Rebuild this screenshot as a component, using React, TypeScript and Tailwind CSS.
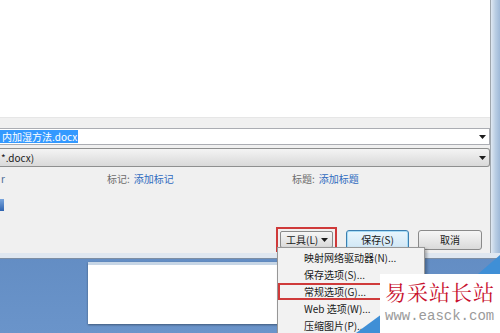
import React from 'react';

const cjk = "font-['Noto_Sans_CJK_SC',sans-serif]";

const MenuItem: React.FC<{ label: string; marked?: boolean }> = ({ label, marked }) => (
  <div
    className={`flex h-[17px] items-center whitespace-nowrap text-[10px] text-[#1a1a1a] ${
      marked ? 'border-2 border-[#cf3a3a] pl-[24px]' : 'pl-[26px]'
    }`}
  >
    {label}
  </div>
);

const Caret: React.FC = () => (
  <svg width="7" height="4" viewBox="0 0 7 4" className="shrink-0">
    <path d="M0 0h7L3.5 4z" fill="#1c1c1c" />
  </svg>
);

const App: React.FC = () => {
  return (
    <div className={`relative h-[333px] w-[500px] overflow-hidden bg-gradient-to-b from-[#4d77af] to-[#6a94ca] ${cjk}`}>
      {/* save dialog */}
      <div className="flex h-[259px] flex-col">
        <div className="flex flex-1">
          <div className="flex w-[491px] flex-col border-r border-[#9fa6ad] bg-[#f0f0f0]">
            <div className="h-[118px] border-b border-[#e6e6e6] bg-white" />

            <div className="mt-[10px] flex h-[17px] items-center justify-between border-y border-r border-[#abadb3] bg-white pr-[3px]">
              <span className="flex h-[13px] items-center bg-[#3399ff] pl-[2px] pr-[1px] text-[10px] leading-none text-white">
                内加湿方法.docx
              </span>
              <Caret />
            </div>

            <div className="mt-[3px] flex h-[19px] items-center justify-between rounded-r-[3px] border-y border-r border-[#8e8f8f] bg-gradient-to-b from-[#f4f4f4] to-[#d9d9d9] pr-[3px]">
              <span className="pl-[1px] text-[10px] leading-none text-[#1a1a1a]">*.docx)</span>
              <Caret />
            </div>

            <div className="mt-[5px] flex h-[14px] items-center text-[10px] leading-none">
              <div className="w-[107px] pl-[1px] text-[#4a6a95]">r</div>
              <div className="flex w-[185px] gap-[4px]">
                <span className="text-[#6d6d6d]">标记:</span>
                <span className="text-[#2f6bbf]">添加标记</span>
              </div>
              <div className="flex gap-[4px]">
                <span className="text-[#6d6d6d]">标题:</span>
                <span className="text-[#2f6bbf]">添加标题</span>
              </div>
            </div>

            <div className="mt-[13px] h-[12px] w-[4px] bg-gradient-to-b from-[#7aa6dd] to-[#2f64b0]" />

            <div className="mt-[16px] flex items-center justify-end gap-[9px] pr-[8px]">
              <div className="border-2 border-[#cf3a3a] p-[2px]">
                <div className="flex h-[17px] w-[53px] items-center justify-between whitespace-nowrap rounded-[2px] border border-[#8a8a8a] bg-gradient-to-b from-[#f6f6f6] to-[#dadada] pl-[5px] pr-[4px] text-[10px] leading-none text-[#1a1a1a]">
                  <span>工具(L)</span>
                  <Caret />
                </div>
              </div>
              <div className="flex h-[20px] w-[63px] items-center justify-center rounded-[3px] border border-[#3c7fb1] bg-gradient-to-b from-[#eaf6fd] to-[#cfe6f5] text-[10px] text-[#1a1a1a] shadow-[inset_0_0_0_1px_#a8dcf5]">
                保存(S)
              </div>
              <div className="flex h-[20px] w-[64px] items-center justify-center rounded-[3px] border border-[#8a8a8a] bg-gradient-to-b from-[#f6f6f6] to-[#dadada] text-[10px] text-[#1a1a1a]">
                取消
              </div>
            </div>
          </div>
          <div className="flex-1 bg-gradient-to-r from-[#dfe8f2] via-[#b9cde3] to-[#9fb9d8]" />
        </div>
        <div className="h-[6px] border-b border-[#7d8ea3] bg-[#dfe7f0]" />
      </div>

      {/* desktop window behind */}
      <div className="pl-[88px] pt-[3px]">
        <div className="h-[62px] w-[300px] border-t-[3px] border-[#c7d6e6] bg-white shadow-[0_1px_2px_rgba(0,0,0,0.4)]" />
      </div>

      {/* tools drop-down menu */}
      <div className="absolute left-[277px] top-[247px] w-[148px] border border-[#979797] bg-[#f2f2f2] pt-px shadow-[2px_2px_3px_rgba(0,0,0,0.3)]">
        <MenuItem label="映射网络驱动器(N)..." />
        <MenuItem label="保存选项(S)..." />
        <MenuItem label="常规选项(G)..." marked />
        <MenuItem label="Web 选项(W)..." />
        <MenuItem label="压缩图片(P)..." />
      </div>

      {/* watermark */}
      <svg className="absolute left-[356px] top-[255px]" width="144" height="78" viewBox="0 0 144 78">
        <path d="M144 0V19H122z" fill="#3f8fd6" />
        <path d="M0 78L30 56V78z" fill="#3f8fd6" />
      </svg>
      <div className="absolute left-[380px] top-[274px] flex h-[59px] w-[120px] flex-col bg-white pl-[5px] pt-[4px]">
        <div className="whitespace-nowrap font-['Noto_Serif_CJK_SC','Noto_Sans_CJK_SC',serif] text-[21px] leading-[26px] tracking-[1px] text-[#c8102e]">
          易采站长站
        </div>
        <div className="mt-[3px] whitespace-nowrap font-['Liberation_Mono',monospace] text-[14px] leading-[18px] text-[#9a9a9a]">
          www.easck.com
        </div>
      </div>
    </div>
  );
};

export default App;
